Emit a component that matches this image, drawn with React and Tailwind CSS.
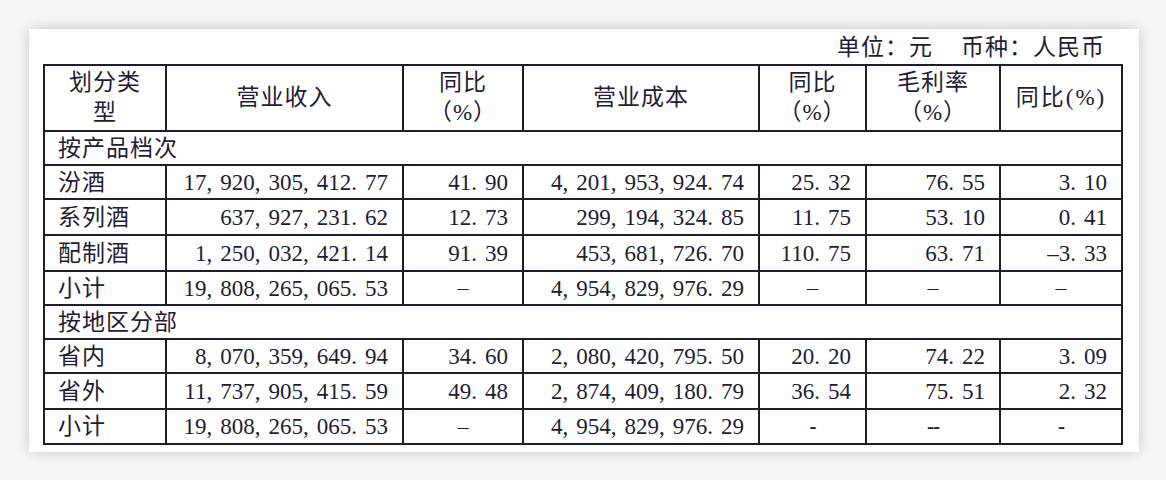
import React from "react";

const FONT = { fontFamily: '"Liberation Serif", "Noto Sans CJK SC", serif' };

function Num({ s }) {
  return (
    <>
      {s.split("").map((c, i) =>
        c === "," || c === "." ? (
          <span key={i} className="mr-[8px]">
            {c}
          </span>
        ) : (
          <React.Fragment key={i}>{c}</React.Fragment>
        )
      )}
    </>
  );
}

const rows = [
  { section: "按产品档次", h: "h-[34px]" },
  { label: "汾酒", h: "h-[34px]", v: ["17,920,305,412.77", "41.90", "4,201,953,924.74", "25.32", "76.55", "3.10"] },
  { label: "系列酒", h: "h-[36px]", v: ["637,927,231.62", "12.73", "299,194,324.85", "11.75", "53.10", "0.41"] },
  { label: "配制酒", h: "h-[36px]", v: ["1,250,032,421.14", "91.39", "453,681,726.70", "110.75", "63.71", "–3.33"] },
  { label: "小计", h: "h-[34px]", v: ["19,808,265,065.53", "–", "4,954,829,976.29", "–", "–", "–"] },
  { section: "按地区分部", h: "h-[34px]" },
  { label: "省内", h: "h-[34px]", v: ["8,070,359,649.94", "34.60", "2,080,420,795.50", "20.20", "74.22", "3.09"] },
  { label: "省外", h: "h-[36px]", v: ["11,737,905,415.59", "49.48", "2,874,409,180.79", "36.54", "75.51", "2.32"] },
  { label: "小计", h: "h-[35px]", v: ["19,808,265,065.53", "–", "4,954,829,976.29", "-", "--", "-"], small: true },
];

const cell = "border-2 border-[#1f1b30] p-0";

export default function App() {
  return (
    <div className="min-h-[480px] w-[1166px] bg-[#f6f7f9] pt-[29px] pl-[29px]" style={FONT}>
      <div className="w-[1110px] h-[423px] bg-white shadow-[0_0_14px_rgba(0,0,0,0.2)] pl-[14px] text-[#221c34]">
        <div className="h-[35px] w-[1078px] flex items-center justify-end pr-[16px] pt-[2px] text-[23px] tracking-[1px] leading-none">
          <span>单位：元</span>
          <span className="ml-[28px]">币种：人民币</span>
        </div>
        <table className="table-fixed border-collapse w-[1078px]">
          <colgroup>
            <col className="w-[122px]" />
            <col className="w-[237px]" />
            <col className="w-[120px]" />
            <col className="w-[236px]" />
            <col className="w-[107px]" />
            <col className="w-[134px]" />
            <col className="w-[122px]" />
          </colgroup>
          <tbody>
            <tr className="h-[66px] text-[23px] tracking-[1px] leading-[30px] text-center">
              <td className={cell}>划分类<br />型</td>
              <td className={cell}>营业收入</td>
              <td className={cell}>同比<br />（%）</td>
              <td className={cell}>营业成本</td>
              <td className={cell}>同比<br />（%）</td>
              <td className={cell}>毛利率<br />（%）</td>
              <td className={cell}><span className="tracking-[2px]">同比(%)</span></td>
            </tr>
            {rows.map((r, i) =>
              r.section ? (
                <tr key={i} className={r.h}>
                  <td colSpan={7} className={`${cell} pl-[13px] text-[23px] tracking-[1px] leading-none`}>
                    {r.section}
                  </td>
                </tr>
              ) : (
                <tr key={i} className={r.h}>
                  <td className={`${cell} pl-[13px] text-[23px] tracking-[1px] leading-none`}>{r.label}</td>
                  {r.v.map((v, j) => {
                    const dash = v === "–" || v === "-" || v === "--";
                    if (dash) {
                      return (
                        <td key={j} className={`${cell} text-center leading-none ${r.small && v !== "–" ? "text-[21px] font-bold tracking-[-1px]" : "text-[22px]"}`}>
                          {v}
                        </td>
                      );
                    }
                    return (
                      <td key={j} className={`${cell} text-right pr-[14px] text-[23px] leading-none whitespace-nowrap`}>
                        <Num s={v} />
                      </td>
                    );
                  })}
                </tr>
              )
            )}
          </tbody>
        </table>
      </div>
    </div>
  );
}
